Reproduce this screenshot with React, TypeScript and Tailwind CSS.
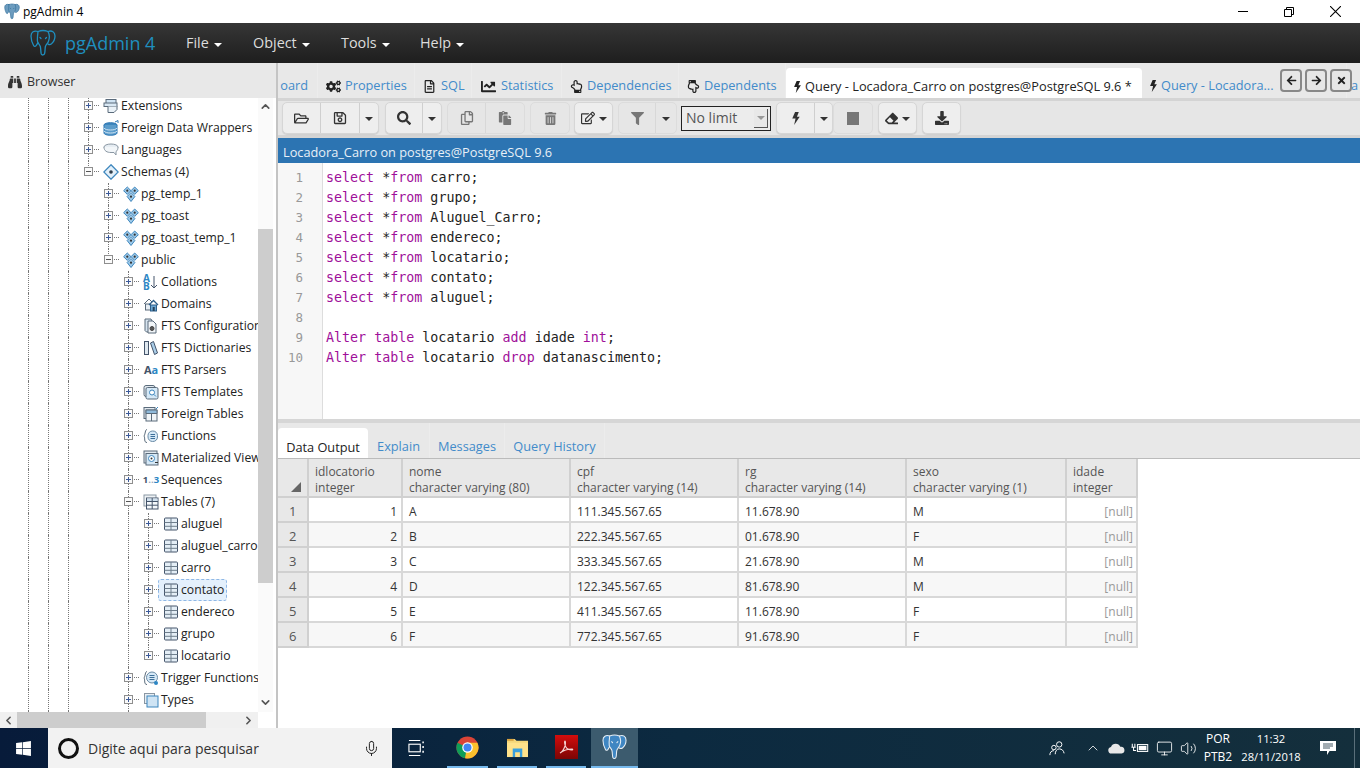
import {
  FaArrowLeft,
  FaArrowRight,
  FaBinoculars,
  FaChartLine,
  FaCogs,
  FaDownload,
  FaEraser,
  FaFilter,
  FaRegCopy,
  FaRegEdit,
  FaRegFileAlt,
  FaRegFolderOpen,
  FaRegHandPointUp,
  FaRegSave,
  FaPaste,
  FaSearch,
  FaTimes,
  FaTrashAlt,
  FaWindows,
} from "react-icons/fa";
import { ChevronLeft, ChevronRight, ChevronUp, ChevronDown, Mic, Monitor, Volume2 } from "lucide-react";
import type { ReactNode } from "react";

const Caret = ({ light }: { light?: boolean }) => (
  <span className={`inline-block w-0 h-0 border-x-[4px] border-x-transparent border-t-[4px] ${light ? "border-t-white mt-[5px]" : "border-t-[#333] mt-[2px]"}`} />
);

const Bolt = ({ className = "" }: { className?: string }) => (
  <svg viewBox="0 0 8 14" className={className} fill="currentColor">
    <path d="M3 0h4L5 5h3L2 14l1.500-7H0z" />
  </svg>
);

function Elephant({ className = "", stroke = "#1f8fbf", fill = "none", sw = 1.3 }: { className?: string; stroke?: string; fill?: string; sw?: number }) {
  return (
    <svg viewBox="0 0 26 28" className={className} fill={fill} stroke={stroke} strokeWidth={sw} strokeLinejoin="round" strokeLinecap="round">
      <path d="M8 2.500C4 1.200 1 3 1 7c0 3 1.200 7 2.600 9.500.8 1.400 2 1.200 2.800-.2.6-1 1-2 1.600-2.600" />
      <path d="M18 2.500c4-1.400 7 .5 7 4.500 0 3.500-1.500 6-3.500 7.800-1.200 1-2.500.8-3.400.3" />
      <path d="M8 2.500c3-1.200 7-1.200 10 0 1.600 3 1.400 7.500.4 10-.8 2-2.400 3-3 5-.5 2.200-.2 5-.8 7-.5 1.800-2.600 2-3.300.4-.7-1.800-.3-5-1-7.400-.6-2-2.400-3-2.800-5.200-.4-3 .2-7 .5-9.800z" />
      <path d="M10 8.500l1 1M16.500 8.500l-1 1" />
    </svg>
  );
}

// small tree icons, 16px box
const T = ({ children }: { children: ReactNode }) => (
  <svg viewBox="0 0 16 16" className="w-4 h-4 shrink-0" fill="none" stroke="#5a6b7b" strokeWidth="1">
    {children}
  </svg>
);

const treeIcons: Record<string, ReactNode> = {
  ext: (
    <T>
      <rect x="3" y="1.500" width="10" height="4" fill="#cfe3f3" />
      <rect x="1" y="5" width="13" height="3.500" fill="#d9e8f4" />
      <path d="M5 8.500v6h6l3-3V8.500" fill="#eaf2f8" />
    </T>
  ),
  fdw: (
    <T>
      <ellipse cx="7.500" cy="5" rx="6.500" ry="2.300" fill="#3d86bd" stroke="#2c76b4" />
      <path d="M1 5v8c0 1.300 3 2.300 6.500 2.300S14 14.300 14 13V5" fill="#5b9ccb" stroke="#2c76b4" />
      <path d="M1 8c1 1.400 3 2 6.500 2S13 9.400 14 8M1 11c1 1.400 3 2 6.500 2S13 12.400 14 11" stroke="#cfe3f3" />
      <path d="M12 2l3-1.500V3" stroke="#2c76b4" />
    </T>
  ),
  lang: (
    <T>
      <ellipse cx="8" cy="5" rx="7" ry="3" fill="#e6edf3" stroke="#8a97a3" />
      <path d="M1 5c0 4 3 5.500 7 5.500h3l2 2.500v-3.500c1.500-.8 2-2.500 2-4.500" fill="#f2f6f9" stroke="#8a97a3" />
    </T>
  ),
  schemas: (
    <T>
      <path d="M8 .8L15.200 8 8 15.200.8 8z" fill="#e3f0fa" stroke="#3d86bd" strokeWidth="1.300" />
      <circle cx="8" cy="8" r="1.800" fill="#2f3d4a" stroke="none" />
    </T>
  ),
  schema: (
    <T>
      <path d="M4.300 1L8 4.700 4.300 8.400.6 4.700z" fill="#9cc8e8" stroke="#3d86bd" />
      <path d="M11.700 1l3.700 3.700-3.700 3.700L8 4.700z" fill="#9cc8e8" stroke="#3d86bd" />
      <path d="M8 6.500l3.900 4L8 15.500l-3.900-5z" fill="#9cc8e8" stroke="#3d86bd" />
      <circle cx="4.300" cy="4.700" r="1.100" fill="#333" stroke="none" />
      <circle cx="11.700" cy="4.700" r="1.100" fill="#333" stroke="none" />
      <circle cx="8" cy="10.700" r="1.100" fill="#333" stroke="none" />
    </T>
  ),
  collation: (
    <span className="w-4 h-4 shrink-0 flex items-center leading-none">
      <span className="text-[10px] font-bold text-[#2c86c4] leading-[8px]">
        A
        <br />
        B
      </span>
      <svg viewBox="0 0 8 14" className="w-2 h-[14px]" fill="none" stroke="#44546a" strokeWidth="1">
        <path d="M4 1v12M1 10l3 3 3-3" />
      </svg>
    </span>
  ),
  domain: (
    <T>
      <path d="M1 8l5-5 3 3" stroke="#5a6b7b" />
      <rect x="2.500" y="8" width="5" height="6" fill="#e7eef4" />
      <path d="M6 9l4.500-4.500L15 9" stroke="#2c5f8a" strokeWidth="1.300" />
      <rect x="7.500" y="9" width="6" height="6" fill="#6aa5d1" stroke="#2c5f8a" />
      <rect x="9.700" y="11" width="2" height="4" fill="#24425c" stroke="none" />
    </T>
  ),
  ftsconf: (
    <T>
      <path d="M2 1h6l1 2v11H3.500L2 12.500z" fill="#d7e4ef" />
      <path d="M5 3h5l3 3v9H5z" fill="#f1f5f8" />
      <circle cx="9" cy="10.500" r="2" fill="#555" stroke="#444" />
    </T>
  ),
  ftsdict: (
    <T>
      <rect x="1.500" y="1.500" width="4" height="13" fill="#dfe8ef" stroke="#44546a" />
      <path d="M7.500 3l3-1.500 4 11.500-3 1.500z" fill="#a9cde8" stroke="#44546a" />
    </T>
  ),
  parser: (
    <span className="w-4 h-4 shrink-0 flex items-baseline justify-center font-bold text-[11px] leading-4">
      <span className="text-[#44546a]">A</span>
      <span className="text-[#2c86c4]">a</span>
    </span>
  ),
  ftstpl: (
    <T>
      <rect x="1" y="1.500" width="11" height="11" rx="2" fill="#e2e9ef" />
      <rect x="3" y="3.500" width="12" height="11.500" rx="1.500" fill="#d5e8f6" />
      <circle cx="9" cy="8.500" r="2.500" fill="#fff" stroke="#3d86bd" />
      <path d="M11 10.500l2 2" stroke="#3d86bd" />
    </T>
  ),
  ftable: (
    <T>
      <rect x="1" y="1.500" width="11" height="11" fill="#e2e9ef" />
      <rect x="3" y="4" width="11" height="11" fill="#f1f5f8" />
      <path d="M3 7.500h11M8.500 4v11" />
      <path d="M3 4h11v3.500H3z" fill="#8fbadb" />
      <path d="M13 3l2-2" stroke="#3d86bd" />
    </T>
  ),
  func: (
    <T>
      <path d="M4 1.500C2 1.500 2.500 6 1 8c1.500 2-.5 6.500 3 6.500" />
      <rect x="5" y="3" width="9.500" height="10.500" rx="4.500" fill="#d5e8f6" stroke="#6a8ba6" />
      <path d="M7.500 6.500h4.500M7.500 8.500h4.500M7.500 10.500h4.500" stroke="#3d6f99" />
    </T>
  ),
  matview: (
    <T>
      <rect x="1" y="1" width="13" height="12" fill="#e2e9ef" />
      <rect x="3" y="3.500" width="12" height="11.500" fill="#d5e8f6" />
      <circle cx="8.500" cy="8.500" r="3" fill="#fff" stroke="#3d86bd" />
      <circle cx="8.500" cy="8.500" r="1" fill="#333" stroke="none" />
      <path d="M12 12.500h3" stroke="#333" />
    </T>
  ),
  seq: (
    <span className="w-4 h-4 shrink-0 flex items-center justify-center font-bold text-[9.500px] leading-4 whitespace-nowrap">
      <span className="text-[#44546a]">1</span>
      <span className="text-[#9ab]">..</span>
      <span className="text-[#2c86c4]">3</span>
    </span>
  ),
  tables: (
    <T>
      <rect x="1" y="1" width="12" height="11" fill="#eef2f5" stroke="#8a97a3" />
      <rect x="3.500" y="4" width="11.500" height="11" fill="#f4f8fb" stroke="#44546a" />
      <rect x="4" y="4.500" width="10.500" height="3" fill="#cfe0ee" stroke="none" />
      <path d="M3.500 7.500h11.500M3.500 11.200h11.500M9.200 4v11" stroke="#44546a" />
    </T>
  ),
  table: (
    <T>
      <rect x="1.500" y="2" width="13" height="12" rx="1" fill="#e4eef6" stroke="#44546a" />
      <path d="M1.500 6.500h13M1.500 10.300h13M8 2v12" stroke="#6f7f8d" />
    </T>
  ),
  trigger: (
    <T>
      <path d="M4 1.500C2 1.500 2.500 6 1 8c1.500 2-.5 6.500 3 6.500" />
      <circle cx="9" cy="7.500" r="5.500" fill="#d5e8f6" stroke="#6a8ba6" />
      <path d="M6.500 5.500h5M6.500 7.500h5M6.500 9.500h5" stroke="#3d6f99" />
      <circle cx="13" cy="13" r="2" fill="#2c86c4" stroke="none" />
    </T>
  ),
  types: (
    <T>
      <rect x="1.500" y="1.500" width="10" height="10" fill="#e8eef3" stroke="#8a97a3" />
      <rect x="4" y="4" width="11" height="11" fill="#cfe4f4" stroke="#3d86bd" />
    </T>
  ),
};

type Row = { lvl: number; icon: string; label: string; open?: boolean; last?: boolean; selected?: boolean };

const rows: Row[] = [
  { lvl: 4, icon: "ext", label: "Extensions" },
  { lvl: 4, icon: "fdw", label: "Foreign Data Wrappers" },
  { lvl: 4, icon: "lang", label: "Languages" },
  { lvl: 4, icon: "schemas", label: "Schemas (4)", open: true, last: true },
  { lvl: 5, icon: "schema", label: "pg_temp_1" },
  { lvl: 5, icon: "schema", label: "pg_toast" },
  { lvl: 5, icon: "schema", label: "pg_toast_temp_1" },
  { lvl: 5, icon: "schema", label: "public", open: true, last: true },
  { lvl: 6, icon: "collation", label: "Collations" },
  { lvl: 6, icon: "domain", label: "Domains" },
  { lvl: 6, icon: "ftsconf", label: "FTS Configurations" },
  { lvl: 6, icon: "ftsdict", label: "FTS Dictionaries" },
  { lvl: 6, icon: "parser", label: "FTS Parsers" },
  { lvl: 6, icon: "ftstpl", label: "FTS Templates" },
  { lvl: 6, icon: "ftable", label: "Foreign Tables" },
  { lvl: 6, icon: "func", label: "Functions" },
  { lvl: 6, icon: "matview", label: "Materialized Views" },
  { lvl: 6, icon: "seq", label: "Sequences" },
  { lvl: 6, icon: "tables", label: "Tables (7)", open: true },
  { lvl: 7, icon: "table", label: "aluguel" },
  { lvl: 7, icon: "table", label: "aluguel_carro" },
  { lvl: 7, icon: "table", label: "carro" },
  { lvl: 7, icon: "table", label: "contato", selected: true },
  { lvl: 7, icon: "table", label: "endereco" },
  { lvl: 7, icon: "table", label: "grupo" },
  { lvl: 7, icon: "table", label: "locatario", last: true },
  { lvl: 6, icon: "trigger", label: "Trigger Functions" },
  { lvl: 6, icon: "types", label: "Types" },
];

function guideOn(i: number, lvl: number) {
  if (i >= 1 && i <= 3) return true;
  return i === 6 && lvl === 7;
}

function TreeRow({ r }: { r: Row }) {
  const cells = [];
  for (let i = 0; i < r.lvl; i++) {
    cells.push(<div key={i} className={`w-[20px] h-full shrink-0 ${guideOn(i, r.lvl) ? "border-l border-dotted border-[#777]" : ""}`} />);
  }
  return (
    <div className="flex h-[22px] pl-[8px] items-center">
      {cells}
      <div className="relative w-[15px] h-full shrink-0">
        <div className={`absolute left-0 top-0 border-l border-dotted border-[#777] ${r.last ? "h-1/2" : "h-full"}`} />
        <div className="absolute left-0 top-[10px] w-[11px] border-t border-dotted border-[#777]" />
        <div className="absolute left-[-4px] top-[6px] w-[9px] h-[9px] border border-[#8e8e8e] bg-[#fafafa] flex items-center justify-center">
          <div className={`w-[5px] h-px ${r.open ? "bg-[#555]" : "bg-[#3b5998]"}`} />
          {!r.open && <div className="absolute w-px h-[5px] bg-[#3b5998]" />}
        </div>
      </div>
      <div className={`flex items-center gap-[2px] whitespace-nowrap ${r.selected ? "h-[22px] -ml-[5px] pl-[4px] pr-[2px] border border-dashed border-[#8fb8e6] rounded-[3px] bg-[#e4f0fc]" : ""}`}>
        {treeIcons[r.icon]}
        <span className="text-[12.2px] text-[#222]">{r.label}</span>
      </div>
    </div>
  );
}

function Sidebar() {
  return (
    <aside className="w-[278px] shrink-0 flex flex-col border-r-2 border-[#c4c4c4] bg-white">
      <div className="h-[35px] shrink-0 bg-[#e8e8e8] flex items-center pl-[8px] pt-[3px] gap-[5px] text-[12.5px] text-[#333]">
        <FaBinoculars className="text-[14px] text-[#333]" />
        Browser
      </div>
      <div className="flex flex-1 min-h-0">
        <div className="w-[258px] shrink-0 overflow-hidden">
          <div className="-mt-[3px]">
            {rows.map((r) => (
              <TreeRow key={r.label} r={r} />
            ))}
            <div className="flex h-[22px] pl-[8px]">
              {[0, 1, 2, 3, 4, 5, 6].map((i) => (
                <div key={i} className={`w-[20px] h-full shrink-0 ${guideOn(i, 7) ? "border-l border-dotted border-[#777]" : ""}`} />
              ))}
            </div>
          </div>
        </div>
        <div className="w-[15px] shrink-0 bg-[#fafafa] flex flex-col">
          <div className="h-[131px] shrink-0 flex justify-center pt-[2px]">
            <ChevronUp size={13} strokeWidth={3} className="text-[#555]" />
          </div>
          <div className="h-[354px] shrink-0 bg-[#cdcdcd]" />
          <div className="flex-1 flex items-end justify-center pb-[3px]">
            <ChevronDown size={13} strokeWidth={3} className="text-[#555]" />
          </div>
        </div>
      </div>
      <div className="h-[16px] shrink-0 flex">
        <div className="w-[258px] bg-[#f0f0f0] flex items-center">
          <div className="w-[17px] flex justify-center">
            <ChevronLeft size={13} strokeWidth={3} className="text-[#555]" />
          </div>
          <div className="w-[189px] h-full bg-[#cdcdcd]" />
          <div className="flex-1 flex justify-end pr-[3px]">
            <ChevronRight size={13} strokeWidth={3} className="text-[#555]" />
          </div>
        </div>
      </div>
    </aside>
  );
}

function TopTab({ w, icon, label, active }: { w: string; icon?: ReactNode; label: string; active?: boolean }) {
  return (
    <div className={`${w} shrink-0 flex items-center gap-[4px] whitespace-nowrap text-[12.75px] ${active ? "bg-white text-[#222] h-[30px] rounded-t-[4px] self-end pl-[8px] pt-[8px]" : "text-[#428bca] h-[35px] pl-[8px] pt-[11px] border-r border-[#ececec]"}`}>
      {icon}
      {label}
    </div>
  );
}

function NavSquare({ children }: { children: ReactNode }) {
  return (
    <div className="w-[22px] h-[23px] rounded-[4px] border-2 border-[#888] bg-[#e6e6e6] flex items-center justify-center text-[#222] text-[11px]">
      {children}
    </div>
  );
}

function TabStrip() {
  return (
    <div className="relative h-[35px] shrink-0 bg-[#e8e8e8] flex items-end overflow-hidden">
      <div className="w-[40px] shrink-0 h-[35px] overflow-hidden flex items-center justify-end pr-[9px] pt-[11px] text-[12.75px] text-[#428bca] border-r border-[#ececec]">
        oard
      </div>
      <TopTab w="w-[97px]" icon={<FaCogs className="text-[15px] text-[#222]" />} label="Properties" />
      <TopTab w="w-[57px]" icon={<FaRegFileAlt className="text-[13px] text-[#222] mr-px" />} label="SQL" />
      <TopTab w="w-[90px]" icon={<FaChartLine className="text-[15px] text-[#222] ml-px mr-px" />} label="Statistics" />
      <TopTab w="w-[117px]" icon={<FaRegHandPointUp className="text-[13px] text-[#222]" />} label="Dependencies" />
      <TopTab w="w-[107px]" icon={<FaRegHandPointUp className="text-[13px] text-[#222] rotate-180" />} label="Dependents" />
      <TopTab w="w-[356px]" icon={<Bolt className="w-[7px] h-[12px] text-[#222]" />} label="Query - Locadora_Carro on postgres@PostgreSQL 9.6 *" active />
      <TopTab w="w-[205px]" icon={<Bolt className="w-[7px] h-[12px] text-[#222]" />} label="Query - Locadora..." />
      <div className="shrink-0 h-[35px] pl-[4px] pt-[11px] flex items-center text-[12.75px] text-[#428bca]">a</div>
      <div className="absolute right-[8px] top-[6px] flex gap-[3px]">
        <NavSquare>
          <FaArrowLeft />
        </NavSquare>
        <NavSquare>
          <FaArrowRight />
        </NavSquare>
        <NavSquare>
          <FaTimes />
        </NavSquare>
      </div>
    </div>
  );
}

function Btn({ w, children, off }: { w: string; children: ReactNode; off?: boolean }) {
  return (
    <div className={`${w} h-full flex items-center justify-center gap-[4px] border-r last:border-r-0 ${off ? "border-[#d8d8d8] text-[#777]" : "border-[#cfcfcf] text-[#333]"}`}>
      {children}
    </div>
  );
}

function Group({ children, off, className = "" }: { children: ReactNode; off?: boolean; className?: string }) {
  return (
    <div className={`flex h-[32px] rounded-[5px] border ${className} ${off ? "bg-[#e6e6e6] border-[#dcdcdc]" : "bg-[#eeeeee] border-[#d6d6d6] shadow-[0_1px_1px_rgba(0,0,0,0.1)]"}`}>
      {children}
    </div>
  );
}

function Toolbar() {
  return (
    <div className="h-[40px] shrink-0 bg-[#e6e6e6] border-y-[3px] border-[#d4d4d4] flex items-center pl-[4px] gap-[5px] text-[14px]">
      <Group>
        <Btn w="w-[38px]"><FaRegFolderOpen className="text-[15px]" /></Btn>
        <Btn w="w-[39px]"><FaRegSave className="text-[14px]" /></Btn>
        <Btn w="w-[18px]"><Caret /></Btn>
      </Group>
      <Group className="ml-px">
        <Btn w="w-[37px]"><FaSearch className="text-[14px]" /></Btn>
        <Btn w="w-[18px]"><Caret /></Btn>
      </Group>
      <Group off>
        <Btn w="w-[38px]" off><FaRegCopy className="text-[14px]" /></Btn>
        <Btn w="w-[38px]" off><FaPaste className="text-[14px]" /></Btn>
      </Group>
      <Group off>
        <Btn w="w-[38px]" off><FaTrashAlt className="text-[13px]" /></Btn>
      </Group>
      <Group className="-ml-px">
        <Btn w="w-[37px]"><FaRegEdit className="text-[14px]" /><Caret /></Btn>
      </Group>
      <Group off>
        <Btn w="w-[37px]" off><FaFilter className="text-[13px]" /></Btn>
        <Btn w="w-[20px]" off><Caret /></Btn>
      </Group>
      <div className="w-[90px] -ml-px h-[25px] border border-[#222] bg-[#ececec] flex items-center justify-between pl-[4px] pr-[2px] pb-[2px] text-[14px] text-[#555]">
        No limit
        <div className="w-[14px] h-[19px] mt-[2px] bg-[#e8e8e8] border-r border-b border-[#555] flex items-center justify-center">
          <span className="w-0 h-0 border-x-[4px] border-x-transparent border-t-[4px] border-t-[#999]" />
        </div>
      </div>
      <Group>
        <Btn w="w-[38px]"><Bolt className="w-[8px] h-[13px]" /></Btn>
        <Btn w="w-[17px]"><Caret /></Btn>
      </Group>
      <Group off className="-ml-[5px]">
        <Btn w="w-[38px]" off><div className="w-[12px] h-[13px] bg-[#777]" /></Btn>
      </Group>
      <Group>
        <Btn w="w-[37px]"><FaEraser className="text-[13px]" /><Caret /></Btn>
      </Group>
      <Group>
        <Btn w="w-[37px]"><FaDownload className="text-[14px]" /></Btn>
      </Group>
    </div>
  );
}

const K = ({ children }: { children: ReactNode }) => <span className="text-[#a0109a]">{children}</span>;

const sel = (t: string) => (
  <>
    <K>select</K> *<K>from</K> {t};
  </>
);

const codeLines: ReactNode[] = [
  sel("carro"),
  sel("grupo"),
  sel("Aluguel_Carro"),
  sel("endereco"),
  sel("locatario"),
  sel("contato"),
  sel("aluguel"),
  "",
  <>
    <K>Alter</K> <K>table</K> locatario <K>add</K> idade <K>int</K>;
  </>,
  <>
    <K>Alter</K> <K>table</K> locatario <K>drop</K> datanascimento;
  </>,
];

function Editor() {
  return (
    <div className="h-[256px] shrink-0 flex bg-white font-['DejaVu_Sans_Mono',monospace] text-[13.33px] leading-[20px] text-[#222]">
      <div className="w-[45px] shrink-0 bg-[#f7f7f7] border-r border-[#ddd] pt-[5px] pr-[19px] text-right text-[#999] text-[12.5px]">
        {codeLines.map((_, i) => (
          <div key={i} className="h-[20px]">{i + 1}</div>
        ))}
      </div>
      <div className="pl-[3px] pt-[5px]">
        {codeLines.map((l, i) => (
          <div key={i} className="h-[20px] whitespace-pre">{l}</div>
        ))}
      </div>
    </div>
  );
}

const cols = [
  ["idlocatorio", "integer"],
  ["nome", "character varying (80)"],
  ["cpf", "character varying (14)"],
  ["rg", "character varying (14)"],
  ["sexo", "character varying (1)"],
  ["idade", "integer"],
];

const data = [
  ["1", "A", "111.345.567.65", "11.678.90", "M"],
  ["2", "B", "222.345.567.65", "01.678.90", "F"],
  ["3", "C", "333.345.567.65", "21.678.90", "M"],
  ["4", "D", "122.345.567.65", "81.678.90", "M"],
  ["5", "E", "411.345.567.65", "11.678.90", "F"],
  ["6", "F", "772.345.567.65", "91.678.90", "F"],
];

function Results() {
  return (
    <div className="flex-1 min-h-0 bg-white">
      <div className="h-[36px] bg-[#e8e8e8] border-b border-[#bbb] flex items-end text-[12.75px] text-[#428bca]">
        <div className="w-[90px] h-[30px] bg-white rounded-t-[4px] pt-[9px] flex items-center justify-center text-[#222]">Data Output</div>
        <div className="w-[62px] h-[35px] pt-[13px] flex items-center justify-center border-r border-[#ececec]">Explain</div>
        <div className="w-[75px] h-[35px] pt-[13px] flex items-center justify-center border-r border-[#ececec]">Messages</div>
        <div className="w-[100px] h-[35px] pt-[13px] flex items-center justify-center border-r border-[#ececec]">Query History</div>
      </div>
      <div className="w-[860px] grid grid-cols-[31px_94px_168px_168px_168px_160px_71px] text-[12px] leading-[16px] text-[#333]">
        <div className="relative h-[39px] bg-[#e8e8e8] border-r-2 border-b-2 border-[#d0d0d0]">
          <span className="absolute right-[6px] bottom-[4px] w-0 h-0 border-l-[10px] border-l-transparent border-b-[10px] border-b-[#666]" />
        </div>
        {cols.map((c) => (
          <div key={c[0]} className="h-[39px] bg-[#e8e8e8] border-r-2 border-b-2 border-[#d0d0d0] pl-[6px] pt-[5px] text-[#555] whitespace-nowrap">
            <div>{c[0]}</div>
            <div>{c[1]}</div>
          </div>
        ))}
        {data.map((d, r) => (
          <div key={d[0]} className="contents">
            <div className="h-[25px] bg-[#e8e8e8] border-r-2 border-b-2 border-[#d0d0d0] pl-[11px] pt-[3px] leading-[21px] text-[#555] text-[13px]">{r + 1}</div>
            <div className={`h-[25px] border-r-2 border-b-2 border-[#d8d8d8] pr-[4px] pt-[3px] text-right leading-[21px] ${r % 2 ? "bg-[#f7f7f7]" : "bg-white"}`}>{d[0]}</div>
            {d.slice(1).map((v, i) => (
              <div key={i} className={`h-[25px] border-r-2 border-b-2 border-[#d8d8d8] pl-[6px] pt-[3px] leading-[21px] ${r % 2 ? "bg-[#f7f7f7]" : "bg-white"}`}>{v}</div>
            ))}
            <div className={`h-[25px] border-r-2 border-b-2 border-[#d8d8d8] pr-[3px] pt-[3px] text-right leading-[21px] text-[#999] ${r % 2 ? "bg-[#f7f7f7]" : "bg-white"}`}>[null]</div>
          </div>
        ))}
      </div>
    </div>
  );
}

function Chrome() {
  return (
    <svg viewBox="0 0 24 24" className="w-[23px] h-[23px]">
      <circle cx="12" cy="12" r="11.500" fill="#db4437" />
      <path d="M12 12L1.500 7a11.500 11.500 0 0 0 8 16.200z" fill="#0f9d58" />
      <path d="M12 7h10.300a11.500 11.500 0 0 1-12.800 16.200z" fill="#fbc02d" />
      <circle cx="12" cy="12" r="5.500" fill="#fff" />
      <circle cx="12" cy="12" r="4.200" fill="#4285f4" />
    </svg>
  );
}

function Folder() {
  return (
    <svg viewBox="0 0 24 22" className="w-[23px] h-[21px]">
      <path d="M1 2h8l2 2h12v5H1z" fill="#f5d77a" />
      <path d="M1 6h22v15H1z" fill="#ffe28a" />
      <path d="M7 12h10v9h-2.500v-5h-5v5H7z" fill="#3aa0dd" />
      <path d="M1 2h7v2H1z" fill="#d9a441" />
    </svg>
  );
}

function Pdf() {
  return (
    <div className="w-[23px] h-[24px] bg-gradient-to-b from-[#d30d0d] to-[#7c0505] flex items-center justify-center">
      <svg viewBox="0 0 16 16" className="w-[16px] h-[16px]" fill="none" stroke="#f6d5d5" strokeWidth="1.100">
        <path d="M2 14c2-1 4-4 5-7 .6-2 .6-5 0-5s-.6 3 .6 5.500c1 2 3 3.500 6.400 3.500 1 0 1-1 0-1-4 0-8 1-12 4z" />
      </svg>
    </div>
  );
}

function Taskbar() {
  return (
    <div className="h-[40px] shrink-0 bg-gradient-to-r from-[#071b3a] via-[#0c2a40] to-[#142f3c] flex items-stretch text-white">
      <div className="w-[48px] flex items-center justify-center pr-[2px]">
        <FaWindows className="text-[17px]" />
      </div>
      <div className="w-[344px] bg-[#f2f2f2] flex items-center text-[14px] text-[#333] relative">
        <div className="ml-[10px] w-[21px] h-[21px] rounded-full border-[3px] border-[#111]" />
        <span className="ml-[9px]">Digite aqui para pesquisar</span>
        <Mic size={17} strokeWidth={1.400} className="absolute right-[12px] text-[#222]" />
      </div>
      <div className="w-[55px] flex items-center justify-center pr-[6px]">
        <svg viewBox="0 0 18 18" className="w-[17px] h-[18px]" fill="none" stroke="#fff" strokeWidth="1.200">
          <path d="M1 1h12M1 17h12" />
          <rect x="1" y="5" width="12" height="8" />
          <path d="M16 2v2M16 7v2M16 12v2" strokeWidth="1.600" />
        </svg>
      </div>
      <div className="w-[41px] flex items-center justify-center border-b-2 border-[#76b9ed]"><Chrome /></div>
      <div className="w-[9px]" />
      <div className="w-[40px] flex items-center justify-center border-b-2 border-[#76b9ed]"><Folder /></div>
      <div className="w-[9px]" />
      <div className="w-[40px] flex items-center justify-center border-b-2 border-[#76b9ed]"><Pdf /></div>
      <div className="w-[5px]" />
      <div className="w-[47px] bg-[#3c5b6e] flex items-center justify-center border-b-2 border-[#76b9ed]">
        <Elephant className="w-[25px] h-[28px]" stroke="#e6eef4" fill="#3f86c2" sw={1.100} />
      </div>
      <div className="flex-1 flex items-center justify-end text-[12px]">
        <svg viewBox="0 0 18 18" className="w-[16px] h-[16px] mr-[20px]" fill="none" stroke="#fff" strokeWidth="1.100">
          <circle cx="11.500" cy="5" r="3" />
          <path d="M7 16c0-3 1.500-6 4.500-6s5 2 5.500 5" />
          <circle cx="5.500" cy="8.500" r="2.500" />
          <path d="M1 17c0-3 1.500-5 4.500-5" />
        </svg>
        <ChevronUp size={16} strokeWidth={1.200} className="mr-[7px]" />
        <svg viewBox="0 0 20 12" className="w-[17px] h-[11px] mr-[6px]" fill="#e8e8e8">
          <path d="M4 12a4 4 0 0 1-.5-7.900A6 6 0 0 1 14.500 4 4 4 0 0 1 16 12z" />
        </svg>
        <svg viewBox="0 0 20 14" className="w-[18px] h-[12px] mr-[7px]" fill="none" stroke="#fff" strokeWidth="1.200">
          <path d="M1 2v4M4 2v4M0 6h5M2.500 6v4h3" />
          <rect x="7" y="3" width="12" height="8" />
          <rect x="8.500" y="4.500" width="9" height="5" fill="#fff" stroke="none" />
        </svg>
        <Monitor size={17} strokeWidth={1.200} className="mr-[7px]" />
        <Volume2 size={17} strokeWidth={1.200} className="mr-[1px]" />
        <div className="w-[40px] text-center leading-[18px]">
          <div>POR</div>
          <div>PTB2</div>
        </div>
        <div className="w-[66px] text-center leading-[18px] text-[11.2px]">
          <div>11:32</div>
          <div>28/11/2018</div>
        </div>
        <svg viewBox="0 0 16 16" className="w-[16px] h-[16px] ml-[16px] mr-[18px]" fill="#fff">
          <path d="M0 1h16v10H9.500L7 15v-4H0z" />
          <path d="M3 4h10M3 6h10M3 8h7" stroke="#142f3c" strokeWidth="0.800" />
        </svg>
        <div className="w-[1px] h-full bg-[#5a6f7a] mr-[5px]" />
      </div>
    </div>
  );
}

export default function App() {
  return (
    <div className="w-[1360px] h-[768px] flex flex-col overflow-hidden bg-white font-['Open_Sans',sans-serif]">
      <div className="h-[23px] shrink-0 bg-white flex items-center text-[12px] text-black">
        <Elephant className="w-[16px] h-[17px] ml-[4px]" stroke="#2c6a96" fill="#6c9cbf" sw={1} />
        <span className="ml-[3px]">pgAdmin 4</span>
        <div className="ml-auto flex items-center pr-[2px]">
          <div className="w-[46px] h-[23px] flex items-center justify-center">
            <div className="w-[10px] h-px bg-black" />
          </div>
          <div className="w-[46px] h-[23px] flex items-center justify-center">
            <svg viewBox="0 0 10 10" className="w-[10px] h-[10px]" fill="none" stroke="#000">
              <path d="M.5 2.500h7v7h-7zM2.500 2.500v-2h7v7h-2" />
            </svg>
          </div>
          <div className="w-[46px] h-[23px] flex items-center justify-center">
            <svg viewBox="0 0 10 10" className="w-[11px] h-[11px]" stroke="#000">
              <path d="M0 0l10 10M10 0L0 10" />
            </svg>
          </div>
        </div>
      </div>
      <nav className="h-[40px] shrink-0 bg-gradient-to-b from-[#363636] to-[#1e1e1e] flex items-center text-[14.4px] text-[#ddd]">
        <Elephant className="w-[26px] h-[28px] ml-[30px]" />
        <span className="ml-[9px] text-[18px] text-[#1f8fbf] w-[121px]">pgAdmin 4</span>
        <span className="w-[67px] flex items-center gap-[5px]">File <Caret light /></span>
        <span className="w-[88px] flex items-center gap-[5px]">Object <Caret light /></span>
        <span className="w-[79px] flex items-center gap-[5px]">Tools <Caret light /></span>
        <span className="flex items-center gap-[5px]">Help <Caret light /></span>
      </nav>
      <div className="flex flex-1 min-h-0">
        <Sidebar />
        <main className="flex-1 min-w-0 flex flex-col">
          <TabStrip />
          <Toolbar />
          <div className="h-[25px] shrink-0 bg-[#2c74b2] text-[12.75px] text-[#e8f0f7] flex items-center pl-[5px] pt-[4px]">Locadora_Carro on postgres@PostgreSQL 9.6</div>
          <Editor />
          <div className="h-[4px] shrink-0 bg-[#d6d6d6]" />
          <Results />
        </main>
      </div>
      <Taskbar />
    </div>
  );
}
